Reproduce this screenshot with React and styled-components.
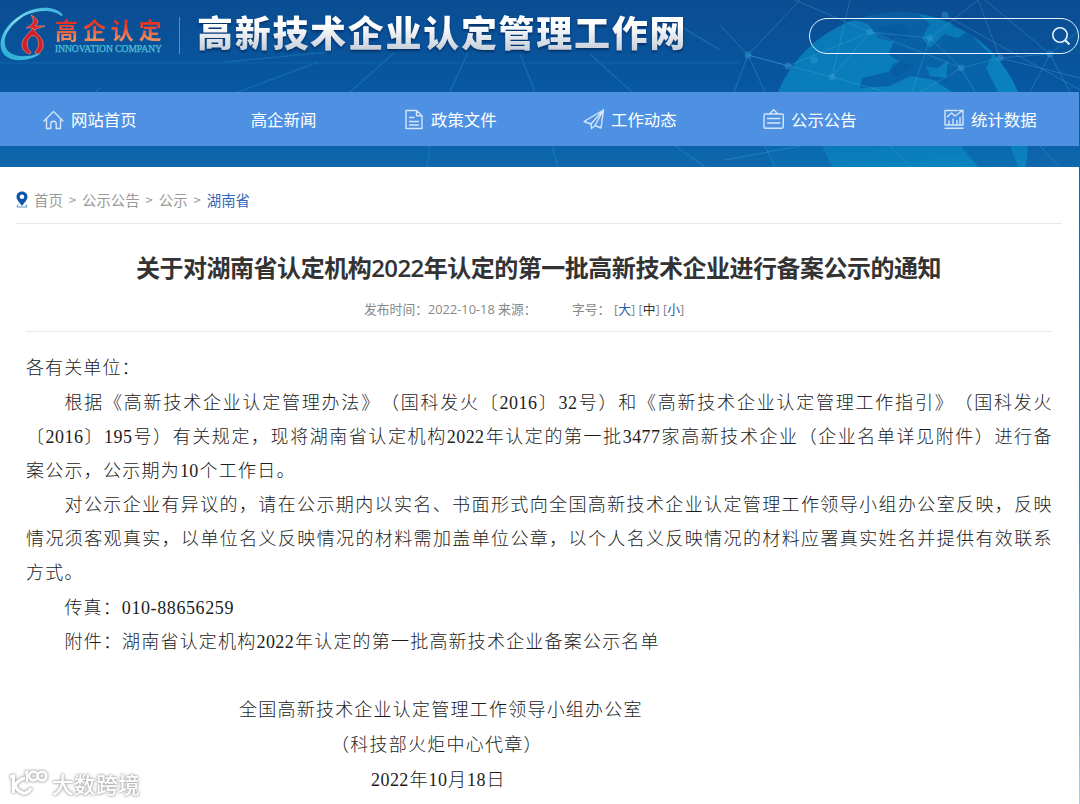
import React from "react";
import styled, { createGlobalStyle } from "styled-components";

const Global = createGlobalStyle`
  * { box-sizing: border-box; }
  body { margin: 0; background: #fff; overflow: hidden; text-spacing-trim: space-all; }
  p, h1, h2 { margin: 0; font-weight: normal; }
`;

const sans = `"Open Sans", "Noto Sans CJK SC", sans-serif`;
const cjk = `"Noto Sans CJK SC", sans-serif`;

const Page = styled.div`
  width: 1080px;
  height: 804px;
  display: flex;
  flex-direction: column;
  font-family: ${sans};
`;

const Header = styled.header`
  height: 167px;
  position: relative;
  display: flex;
  flex-direction: column;
  background: linear-gradient(180deg, #0b4d92 0%, #0757a0 50%, #0a61aa 85%, #1068ab 100%);
`;

const Backdrop = styled.svg`
  position: absolute;
  inset: 0;
`;

const Masthead = styled.div`
  position: relative;
  height: 92px;
  display: flex;
  align-items: flex-start;
`;

const Logo = styled.div`
  display: flex;
  width: 180px;
  height: 72px;
`;

const Emblem = styled.svg`
  width: 54px;
  height: 64px;
  flex: none;
  overflow: visible;
`;

const LogoWords = styled.div`
  padding-top: 16px;
  white-space: nowrap;
`;

const LogoName = styled.div`
  font: 700 23px/27px ${cjk};
  letter-spacing: 4.9px;
  padding-left: 1px;
  background: linear-gradient(180deg, #e8301f 25%, #f08a5c 85%);
  -webkit-background-clip: text;
  background-clip: text;
  color: transparent;
`;

const LogoLatin = styled.div`
  font: 9.6px/11px "Liberation Serif", serif;
  width: 107px;
  margin-left: 1px;
  letter-spacing: -0.06px;
  color: #4fc0dc;
  -webkit-text-stroke: 0.25px #4fc0dc;
`;

const Divider = styled.i`
  width: 1px;
  height: 37px;
  margin-top: 17px;
  background: #5b8dbd;
  margin-left: -1px;
`;

const SiteName = styled.h1`
  margin-left: 17px;
  padding-top: 7px;
  font: 900 36px/48px ${cjk};
  letter-spacing: 1.7px;
  white-space: nowrap;
  background: linear-gradient(180deg, #fff 45%, #c6ced8 92%);
  -webkit-background-clip: text;
  background-clip: text;
  color: transparent;
  filter: drop-shadow(0 2px 1px rgba(0, 25, 70, 0.55));
`;

const Search = styled.div`
  margin-left: auto;
  margin-top: 18px;
  margin-right: 1px;
  width: 270px;
  height: 36px;
  border: 1px solid #e6f2fb;
  border-radius: 18px;
  display: flex;
  align-items: center;
  justify-content: flex-end;
  padding-right: 7px;
`;

const Nav = styled.nav`
  position: relative;
  width: 1079px;
  height: 54px;
  background: #4e91e3;
  display: grid;
  grid-template-columns: repeat(6, 180px);
`;

const NavItem = styled.a`
  display: flex;
  align-items: center;
  justify-content: ${(p) => (p.$plain ? "center" : "flex-start")};
  padding-left: ${(p) => (p.$plain ? "27px" : "43px")};
  gap: 6px;
  color: #fff;
  font: 16.4px/54px ${cjk};
  white-space: nowrap;
`;

const NavIcon = styled.svg`
  width: 22px;
  height: 22px;
  flex: none;
  fill: none;
  stroke: #d6e6fa;
  stroke-width: 1.4;
  stroke-linejoin: round;
  stroke-linecap: round;
  overflow: visible;
  margin-top: 2px;
`;

const Body = styled.div`
  flex: 1;
  border-style: solid;
  border-width: 0 1px 0 0;
  border-image: linear-gradient(180deg, #1a64a2, #3a7fae 50%, #a7cfe2) 1;
  padding: 0 17px 0 16px;
  position: relative;
`;

const Crumbs = styled.div`
  height: 57px;
  border-bottom: 1px solid #e9e9e9;
  display: flex;
  align-items: center;
  padding-top: 9px;
  font: 14.4px/20px ${cjk};
  color: #999;
  white-space: nowrap;
`;

const Pin = styled.svg`
  width: 12px;
  height: 17px;
  margin-right: 6px;
`;

const Crumb = styled.span`
  color: ${(p) => (p.$current ? "#2f66b8" : "#999")};
`;

const Sep = styled.span`
  width: 19.2px;
  text-align: center;
  font-size: 13px;
`;

const Article = styled.article`
  padding: 0 10px 0 10px;
`;

const Title = styled.h2`
  width: 805px;
  margin: 26px 0 0 110px;
  font: 600 24px/36px ${sans};
  letter-spacing: -0.62px;
  color: #333;
  white-space: nowrap;
  text-align-last: justify;
`;

const Meta = styled.div`
  display: flex;
  height: 46px;
  padding: 13px 0 0 338px;
  border-bottom: 1px solid #e9e9e9;
  font: 12.8px/20px ${sans};
  color: #888;
  white-space: nowrap;
`;

const MetaPart = styled.span`
  width: ${(p) => p.$w}px;
`;

const Size = styled.a`
  color: ${(p) => p.$c};
`;

const Text = styled.div`
  padding-top: 19px;
`;

const Line = styled.p`
  height: ${(p) => p.$h || 34.1}px;
  line-height: 35.6px;
  width: ${(p) => p.$w}px;
  margin-left: ${(p) => p.$x || 0}px;
  font-family: "Liberation Serif", "Noto Sans CJK SC", serif;
  font-weight: 300;
  font-size: 18px;
  letter-spacing: ${(p) => p.$ls || 0.45}px;
  color: #1c1c1c;
  white-space: nowrap;
  text-align-last: justify;
`;

const Watermark = styled.div`
  position: absolute;
  left: 8px;
  bottom: 4px;
  display: flex;
  align-items: center;
  height: 32px;
  font: 500 21.5px/32px ${cjk};
  letter-spacing: 0.6px;
  color: #fff;
  white-space: nowrap;
  filter: drop-shadow(0 0 1px #a4a4a4) drop-shadow(0 0 1.5px #c0c0c0);
`;

const WatermarkLogo = styled.svg`
  width: 40px;
  height: 32px;
  margin-right: 4px;
  fill: none;
  stroke: #fff;
  stroke-width: 3;
`;

const icons = {
  home: <path d="M1 12 L10.5 2.5 L20 12 M3.5 10.5 V19.5 H7.8 V14.5 Q7.8 12.3 10.5 12.3 Q13.2 12.3 13.2 14.5 V19.5 H17.5 V10.5" />,
  doc: (
    <path d="M3 1.5 H13.5 L19 6.7 V19.5 H3 Z M13.5 1.5 V6.7 H19 M6.5 8.5 H11 M6.5 12.5 H15.5 M6.5 16 H15.5" />
  ),
  plane: (
    <path d="M1 12.5 L20.5 1 L18 19 L12 16.5 L8.5 19.5 L8 15 Z M8 15 L20.5 1 L12 16.5" />
  ),
  board: (
    <path d="M2.5 5 H18.8 Q20.3 5 20.3 6.7 V17.5 Q20.3 19.2 18.8 19.2 H2.5 Q1 19.2 1 17.5 V6.7 Q1 5 2.5 5 Z M6.8 4.7 L10.7 0.8 L14.6 4.7 M4.5 9.5 H16.8 M4.5 14 H16.8" />
  ),
  chart: (
    <path d="M14 1.5 H2 V16 H20 V6.5 M2 19.3 H20 M4.5 7.5 L8.5 4 L12 7 L19.5 1.5 M16 1.5 H20 V5 M6 15.5 V12 M10 15.5 V10 M14 15.5 V11.5 M17 15.5 V8.5" />
  ),
};

const navItems = [
  ["网站首页", "home"],
  ["高企新闻", null],
  ["政策文件", "doc"],
  ["工作动态", "plane"],
  ["公示公告", "board"],
  ["统计数据", "chart"],
];

const lines = [
  ["各有关单位：", 0, 114, 35],
  ["根据《高新技术企业认定管理办法》（国科发火〔2016〕32号）和《高新技术企业认定管理工作指引》（国科发火", 38.5, 987.5],
  ["〔2016〕195号）有关规定，现将湖南省认定机构2022年认定的第一批3477家高新技术企业（企业名单详见附件）进行备", 0, 1026],
  ["案公示，公示期为10个工作日。", 0, 269],
  ["对公示企业有异议的，请在公示期内以实名、书面形式向全国高新技术企业认定管理工作领导小组办公室反映，反映", 38.5, 987.5],
  ["情况须客观真实，以单位名义反映情况的材料需加盖单位公章，以个人名义反映情况的材料应署真实姓名并提供有效联系", 0, 1026],
  ["方式。", 0, 57],
  ["传真：010-88656259", 38.5, 169.5, 34.1, 0.6],
  ["附件：湖南省认定机构2022年认定的第一批高新技术企业备案公示名单", 38.5, 594.5, 68],
  ["全国高新技术企业认定管理工作领导小组办公室", 213, 403, 35],
  ["（科技部火炬中心代章）", 305, 211, 35],
  ["2022年10月18日", 345, 134],
];

const nodes = [
  [748, 55], [788, 66], [832, 77], [870, 32], [930, 38], [961, 68], [1000, 58], [1050, 54], [814, 60], [945, 15],
];

function HeaderBackdrop() {
  return (
    <Backdrop width="1080" height="167" viewBox="0 0 1080 167">
      <defs>
        <linearGradient id="globe" x1="0" y1="0" x2="0.8" y2="1">
          <stop offset="0" stopColor="#0a80bd" stopOpacity="0.7" />
          <stop offset="1" stopColor="#0b8ac4" stopOpacity="0.8" />
        </linearGradient>
        <clipPath id="disc"><circle cx="898" cy="142" r="130" /></clipPath>
      </defs>
      <g stroke="#2286c6" strokeWidth="1.6" opacity="0.42">
        <path d="M395 52 L350 92 M468 52 L450 92 M520 54 L535 92 M590 54 L632 92 M680 26 L720 50 M318 62 L110 140 M100 88 L40 138 M430 146 L427 167 M552 146 L558 167 M675 146 L705 167 M225 62 L330 52" />
        <path d="M0 63 H740" opacity="0.35" strokeWidth="3" />
      </g>
      <circle cx="898" cy="142" r="130" fill="#0874b4" opacity="0.45" />
      <g clipPath="url(#disc)" fill="url(#globe)">
        <path d="M765 100 C780 62 808 28 846 18 L868 24 L878 38 L894 42 L888 54 L900 62 L888 72 L862 78 L860 88 L890 86 L910 76 L934 80 L952 92 V118 H765 Z" />
        <path d="M917 13 L946 13 L958 20 L952 26 L966 32 L958 38 L944 34 L930 48 L922 38 L930 24 Z M968 24 C990 38 1010 62 1022 94 L1000 96 L986 68 L992 56 L974 38 Z" />
        <path d="M822 145 H960 L978 167 H832 Z M1010 145 H1034 L1030 167 H1018 Z" />
        <path d="M926 66 L938 68 L948 60 L946 78 L930 76 Z" />
      </g>
      <path d="M878 28 L900 24 L910 32 L906 40 L896 37 L890 41 L884 34 Z M903 62 C890 60 886 74 896 76 C912 72 906 64 917 68 M882 70 L888 76" fill="#07579f" opacity="0.55" />
      <g stroke="#3fa2d8" strokeWidth="1" opacity="0.38" fill="none">
        <path d="M748 55 L720 25 M748 55 L800 0 M748 55 L734 92 M748 55 L765 92 M748 55 L788 66 L870 32 L832 77 L748 55 M870 32 L795 0 M870 32 L930 38 L961 68 L870 32 M930 38 L978 0 L1000 58 L961 68 L920 92 M961 68 L975 92 M1000 58 L1050 54 L1080 30 M1050 54 L1030 92 M1050 54 L1070 92 M945 15 L1080 90 M832 77 L886 92 M832 77 L850 0 M1050 54 L985 0 M1080 78 L1000 58 M725 160 L800 146 M765 146 L775 167 M930 38 L912 92 M890 146 L910 167 M1040 146 L1060 167" />
      </g>
      {nodes.map(([x, y]) => (
        <circle key={x} cx={x} cy={y} r="3.5" fill="#36a0d8" opacity="0.4" />
      ))}
    </Backdrop>
  );
}

export default function App() {
  return (
    <Page>
      <Global />
      <Header>
        <HeaderBackdrop />
        <Masthead>
          <Logo>
            <Emblem viewBox="0 0 54 64">
              <defs>
                <linearGradient id="ring" x1="1" y1="0" x2="0.3" y2="1">
                  <stop offset="0" stopColor="#35aee0" />
                  <stop offset="0.5" stopColor="#7ed8ea" />
                  <stop offset="1" stopColor="#2fb4da" />
                </linearGradient>
              </defs>
              <path d="M63 15 C55 5 36 6 21 15 C-2 29 -6 53 11 59 C22 62 34 59 41 53 C28 57 17 58 9 52 C0 44 5 28 24 16 C39 9 54 10 61 16 Z" fill="url(#ring)" />
              <path d="M31 15 C38 19 40 22 35 26 L45 26 C39 28 34 29 30 33 C34 29 34 27 26 28 C34 24 35 21 31 15 Z" fill="#d9262c" stroke="#e9897a" strokeWidth="0.7" />
              <path fillRule="evenodd" d="M33 28 C27 35 22 39 22 45 C22 50 26 53 30 54 L31 52 C27 49 26 43 29 38 C31 35 35 35 37 38 C40 43 38 49 35 52 L36 54 C41 53 44 49 43 43 C42 36 36 34 33 28 Z" fill="#d2202a" stroke="#e9897a" strokeWidth="0.7" />
            </Emblem>
            <LogoWords>
              <LogoName>高企认定</LogoName>
              <LogoLatin>INNOVATION COMPANY</LogoLatin>
            </LogoWords>
          </Logo>
          <Divider />
          <SiteName>高新技术企业认定管理工作网</SiteName>
          <Search>
            <svg width="20" height="20" viewBox="0 0 20 20" fill="none" stroke="#e6f2fb" strokeWidth="1.6">
              <circle cx="9" cy="9" r="7.2" />
              <path d="M14 14 L18.5 18.5" strokeWidth="2" />
            </svg>
          </Search>
        </Masthead>
        <Nav>
          {navItems.map(([label, icon]) => (
            <NavItem key={label} $plain={!icon}>
              {icon && <NavIcon viewBox="0 0 22 22">{icons[icon]}</NavIcon>}
              {label}
            </NavItem>
          ))}
        </Nav>
      </Header>
      <Body>
        <Crumbs>
          <Pin viewBox="0 0 12 17">
            <path fillRule="evenodd" d="M6 0.5 C2.8 0.5 0.5 2.8 0.5 5.8 C0.5 9 4 12 6 15 C8 12 11.5 9 11.5 5.8 C11.5 2.8 9.2 0.5 6 0.5 Z M6 3.4 A2.3 2.3 0 1 1 6 8 A2.3 2.3 0 1 1 6 3.4 Z" fill="#0c55a8" />
            <path d="M2 13.5 L1 16 H11 L10 13.5" fill="none" stroke="#5f94cc" strokeWidth="1" />
          </Pin>
          <Crumb>首页</Crumb>
          <Sep>&gt;</Sep>
          <Crumb>公示公告</Crumb>
          <Sep>&gt;</Sep>
          <Crumb>公示</Crumb>
          <Sep>&gt;</Sep>
          <Crumb $current>湖南省</Crumb>
        </Crumbs>
        <Article>
          <Title>关于对湖南省认定机构2022年认定的第一批高新技术企业进行备案公示的通知</Title>
          <Meta>
            <MetaPart $w={208}>发布时间：2022-10-18 来源：</MetaPart>
            <MetaPart $w={42}>字号：</MetaPart>
            <MetaPart $w={90}>
              [<Size $c="#2a5caa">大</Size>] [<Size $c="#333">中</Size>] [<Size $c="#2a5caa">小</Size>]
            </MetaPart>
          </Meta>
          <Text>
            {lines.map(([text, x, w, h, ls]) => (
              <Line key={text} $x={x} $w={w} $h={h} $ls={ls}>{text}</Line>
            ))}
          </Text>
        </Article>
        <Watermark>
          <WatermarkLogo viewBox="0 0 40 32">
            <path d="M2 9 L5.5 8 V25 M17 10 Q10 12 7 17 Q9 23 15 25 Q20 26 23 20" />
            <path d="M17 5 L19 4 V14" strokeWidth="2.5" />
            <circle cx="25.5" cy="8" r="4.3" strokeWidth="2.5" />
            <circle cx="34" cy="8" r="4.3" strokeWidth="2.5" />
          </WatermarkLogo>
          <span>大数跨境</span>
        </Watermark>
      </Body>
    </Page>
  );
}
